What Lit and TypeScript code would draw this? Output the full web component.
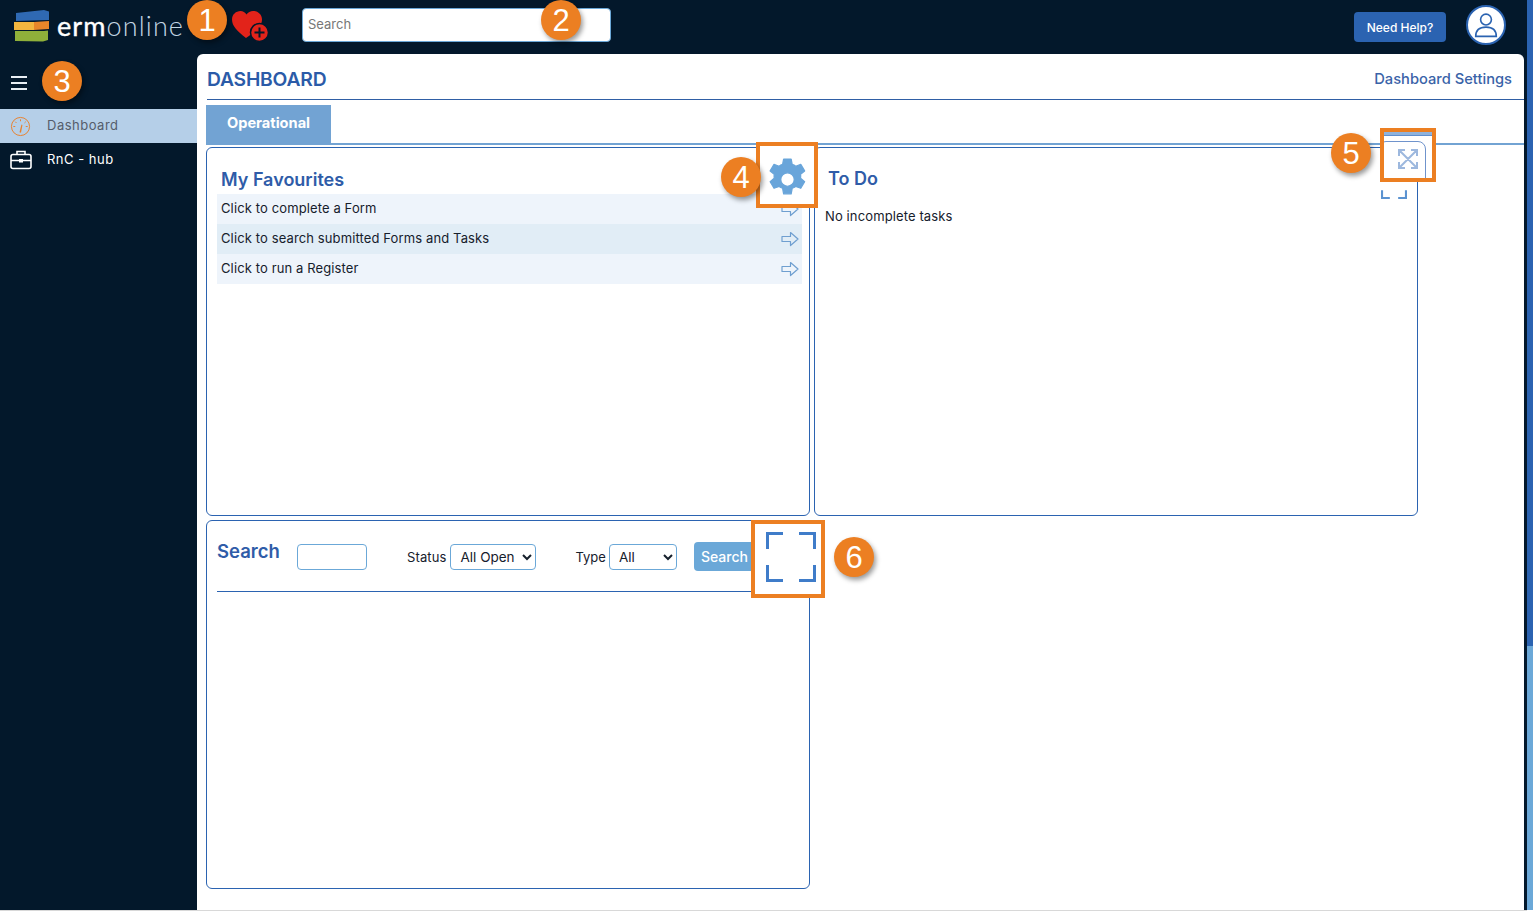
import {css, html, LitElement, svg} from 'lit'
import {customElement} from 'lit/decorators.js'

const arrow = svg`<svg class="arrow" viewBox="0 0 18 16" width="18" height="16"><path d="M1 5.500h8.500V1.500L17 8l-7.500 6.500v-4H1z" fill="none" stroke="#6f9fd0" stroke-width="1.200" stroke-linejoin="round"/></svg>`

const corners = (w: number, t: number, c: string) => svg`<svg viewBox="0 0 50 50" width=${w} height=${w}><path d="M1.500 17V1.500H17M33 1.500h15.500V17M1.500 33v15.500H17M33 48.500h15.500V33" fill="none" stroke=${c} stroke-width=${t}/></svg>`

@customElement('app-root')
export class AppRoot extends LitElement {

    render() {
        return html`
            <div class="page">
                <div class="shell">
                    <header class="top">
                        <svg class="logo" viewBox="0 0 36 32" width="36" height="32">
                            <path d="M2 3l28-3 5 1.500V10L2 11z" fill="#2f69b3"/>
                            <path d="M20 12l15-1v8l-15 1z" fill="#e8862a"/>
                            <path d="M0 12h20v8H0z" fill="#f3b63f"/>
                            <path d="M1 21l29 0 4-.5V30l-5 1.500L1 31z" fill="#8fb03a"/>
                        </svg>
                        <div class="brand"><b>erm</b>online</div>
                        <svg class="heart" viewBox="0 0 38 32" width="38" height="32">
                            <path d="M14 27C5 20 0 15 0 8.500 0 3.500 4 0 8.500 0 11 0 13 1.200 14.500 3.500 16 1.200 18.500 0 21 0c5 0 9 3.500 9 8.500 0 6.500-6 11.500-16 18.500z" fill="#e2231a"/>
                            <circle cx="27.500" cy="21.500" r="9" fill="#e2231a" stroke="#03182b" stroke-width="1.500"/>
                            <path d="M22.500 21.500h10M27.500 16.500v10" stroke="#03182b" stroke-width="2"/>
                        </svg>
                        <input class="global" placeholder="Search"/>
                        <span class="spacer"></span>
                        <button class="help">Need Help?</button>
                        <div class="avatar">
                            <svg viewBox="0 0 24 24" width="26" height="26"><circle cx="12" cy="7" r="5" fill="none" stroke="#2b63b1" stroke-width="1.500"/><path d="M2.500 22.500c0-6 4-8.500 9.500-8.500s9.500 2.500 9.500 8.500z" fill="none" stroke="#2b63b1" stroke-width="1.500"/></svg>
                        </div>
                    </header>
                    <div class="body">
                        <nav class="side">
                            <div class="burger"><i></i><i></i><i></i></div>
                            <div class="item active">
                                <svg viewBox="0 0 22 22" width="21" height="21"><circle cx="11" cy="11" r="9.500" fill="none" stroke="#e8802c" stroke-width="1"/><path d="M10 17l2-8 1 .5-1.500 8z" fill="#e8802c"/><path d="M11 3.500v2M5.500 6l1.300 1.300M16.500 6l-1.300 1.300M3.500 11h2M16.500 11h2" stroke="#e8802c" stroke-width="1"/></svg>
                                <span>Dashboard</span>
                            </div>
                            <div class="item">
                                <svg viewBox="0 0 22 20" width="22" height="20"><rect x="1" y="4.500" width="20" height="14" rx="2" fill="none" stroke="#fff" stroke-width="1.600"/><path d="M7 4.500V1.500h8v3M1 10.500h20" fill="none" stroke="#fff" stroke-width="1.600"/><rect x="9" y="9" width="4" height="3.500" fill="#fff"/></svg>
                                <span>RnC - hub</span>
                            </div>
                        </nav>
                        <main class="panel">
                            <div class="title-row">
                                <h1>DASHBOARD</h1>
                                <a>Dashboard Settings</a>
                            </div>
                            <div class="tabs"><div class="tab">Operational</div></div>
                            <div class="tiles">
                                <section class="tile">
                                    <h2 class="fav">My Favourites</h2>
                                    <div class="rows">
                                        <div class="row"><span>Click to complete a Form</span> ${arrow}</div>
                                        <div class="row"><span>Click to search submitted Forms and Tasks</span> ${arrow}</div>
                                        <div class="row"><span>Click to run a Register</span> ${arrow}</div>
                                    </div>
                                </section>
                                <section class="tile">
                                    <h2 class="todo">To Do</h2>
                                    <p class="none">No incomplete tasks</p>
                                    <span class="small-corners">${corners(26, 5, '#5b93d1')}</span>
                                </section>
                                <section class="tile">
                                    <div class="filters">
                                        <h2 class="search-title">Search</h2>
                                        <input class="term"/>
                                        <label class="status">Status</label>
                                        <select class="s1"><option>All Open</option></select>
                                        <label class="type">Type</label>
                                        <select class="s2"><option>All</option></select>
                                        <button class="go">Search</button>
                                    </div>
                                </section>
                            </div>
                        </main>
                        <div class="strip"></div>
                    </div>
                </div>
                <div class="scroll"><div class="thumb"></div></div>
            </div>

            <div class="box b4">
                <svg viewBox="0 0 24 24" width="49" height="49"><path fill="#69a5da" stroke="#69a5da" stroke-width="0.600" stroke-linejoin="round" fill-rule="evenodd" d="M13.800 2l.5 2.600c.6.200 1.200.5 1.700.9l2.500-.9 1.900 3.200-2 1.700c.1.600.1 1.300 0 1.900l2 1.700-1.900 3.200-2.500-.9c-.5.400-1.100.7-1.700.9l-.5 2.700h-3.700l-.5-2.700c-.6-.2-1.200-.5-1.700-.9l-2.500.9-1.900-3.200 2-1.700c-.1-.6-.1-1.300 0-1.900l-2-1.700 1.900-3.200 2.500.9c.5-.4 1.100-.7 1.700-.9l.5-2.600zM12 8.700a3.300 3.300 0 1 0 0 6.600 3.300 3.300 0 0 0 0-6.600z"/></svg>
            </div>
            <div class="box b5">
                <i class="mini-rule"></i>
                <i class="mini-tile"></i>
                <svg class="expand" viewBox="0 0 24 24" width="24" height="24"><path d="M3 9V3h6M15 3h6v6M3 15v6h6M21 15v6h-6M3.500 3.500l17 17M20.500 3.500l-17 17" fill="none" stroke="#9db8de" stroke-width="2"/></svg>
            </div>
            <div class="box b6">${corners(50, 3, '#3f7cc9')}</div>

            <span class="dot d1">1</span>
            <span class="dot d2">2</span>
            <span class="dot d3">3</span>
            <span class="dot d4">4</span>
            <span class="dot d5">5</span>
            <span class="dot d6">6</span>
        `
    }

    static styles = css`
      :host {
        display: block;
        position: relative;
        width: 1533px;
        height: 912px;
        overflow: hidden;
        background: #fff;
        font-family: "Inter", "Liberation Sans", sans-serif;
        font-size: 13px;
        color: #16202c;
      }

      .page {
        display: flex;
        height: 912px;
      }

      .shell {
        flex: 1;
        display: flex;
        flex-direction: column;
        height: 910px;
        border-bottom: 1px solid #d8d8d8;
        background: #03182b;
      }

      .scroll {
        width: 6px;
        height: 910px;
        background: #6ba8d8;
      }

      .thumb {
        height: 646px;
        background: #2b63b1;
      }

      .top {
        display: flex;
        align-items: center;
        height: 54px;
        padding: 0 21px 0 14px;
        box-sizing: border-box;
      }

      .logo {
        margin-bottom: 3px;
      }

      .brand {
        margin: 0 0 4px 7px;
        width: 125px;
        font-family: "Lato", sans-serif;
        font-weight: 300;
        font-size: 27px;
        letter-spacing: 1.100px;
        color: #c4d6e4;
      }

      .brand b {
        font-weight: 400;
        color: #fff;
        -webkit-text-stroke: 0.400px #fff;
      }

      .heart {
        margin: 0 0 0 50px;
      }

      .global {
        margin: -4px 0 0 32px;
        width: 309px;
        height: 34px;
        box-sizing: border-box;
        padding: 0 5px 2px;
        border: 1px solid #6ba8d8;
        border-radius: 4px;
        font: 13px "Inter", sans-serif;
      }

      .global::placeholder {
        color: #777;
      }

      .spacer {
        flex: 1;
      }

      .help {
        width: 92px;
        height: 30px;
        border: 0;
        border-radius: 4px;
        background: #2b63b1;
        color: #fff;
        font: 500 12px "Inter", sans-serif;
      }

      .avatar {
        display: flex;
        align-items: center;
        justify-content: center;
        margin: -5px 0 0 20px;
        width: 40px;
        height: 40px;
        box-sizing: border-box;
        border: 2px solid #2b63b1;
        border-radius: 50%;
        background: #fff;
      }

      .body {
        flex: 1;
        display: flex;
        min-height: 0;
      }

      .side {
        width: 197px;
        flex: none;
        color: #fff;
      }

      .burger {
        display: flex;
        flex-direction: column;
        gap: 4px;
        width: 16px;
        padding: 22px 0 19px 11px;
      }

      .burger i {
        display: block;
        height: 2px;
        background: #e8eef4;
      }

      .item {
        display: flex;
        align-items: center;
        gap: 15px;
        height: 34px;
        padding-left: 10px;
        font-size: 13px;
      }

      .item span {
        margin-bottom: 2px;
        letter-spacing: 0.500px;
      }

      .item.active {
        background: #b5cfe8;
        color: #555d6b;
      }

      .item.active span {
        margin-left: 1px;
      }

      .panel {
        flex: 1;
        background: #fff;
        border-radius: 6px 6px 0 0;
        padding: 0 0 0 10px;
        min-width: 0;
      }

      .title-row {
        display: flex;
        align-items: center;
        justify-content: space-between;
        height: 45px;
        padding-right: 12px;
        border-bottom: 1px solid #2f5ea5;
      }

      h1 {
        margin: 4px 0 0;
        font-size: 19.300px;
        font-weight: 600;
        letter-spacing: -0.200px;
        color: #2b5ba8;
      }

      .title-row a {
        margin-top: 4px;
        font-size: 14.700px;
        font-weight: 500;
        color: #3a63a8;
      }

      .tabs {
        margin: 5px 0 0 -1px;
        border-bottom: 2px solid #72a3d3;
      }

      .tab {
        display: flex;
        align-items: center;
        justify-content: center;
        width: 125px;
        height: 38px;
        padding-bottom: 2px;
        box-sizing: border-box;
        background: #72a3d3;
        color: #fff;
        font-size: 14.600px;
        font-weight: 700;
      }

      .tiles {
        display: grid;
        grid-template-columns: 604px 604px;
        grid-template-rows: 369px 369px;
        gap: 4px;
        margin: 2px 0 0 -1px;
      }

      .tile {
        position: relative;
        box-sizing: border-box;
        border: 1px solid #2b63b1;
        border-radius: 6px;
        background: #fff;
      }

      h2 {
        margin: 0;
        font-size: 18px;
        font-weight: 600;
        color: #2f5ca8;
      }

      .fav {
        padding: 21px 0 0 14px;
        height: 25px;
      }

      .rows {
        margin: 0 7px 0 10px;
      }

      .row {
        display: flex;
        align-items: center;
        justify-content: space-between;
        height: 30px;
        padding: 0 3px 0 4px;
        background: #eef4fb;
        letter-spacing: 0.120px;
      }

      .row span {
        margin-bottom: 2px;
      }

      .row:nth-child(2) {
        background: #e1edf6;
      }

      .arrow {
        flex: none;
      }

      .todo {
        padding: 20px 0 0 13px;
      }

      .none {
        margin: 19px 0 0 10px;
        letter-spacing: 0.120px;
      }

      .small-corners {
        position: absolute;
        top: 25px;
        right: 10px;
      }

      .filters {
        display: flex;
        align-items: center;
        height: 68px;
        padding-top: 2px;
        margin-left: 10px;
        border-bottom: 1px solid #2b63b1;
      }

      .search-title {
        width: 80px;
        margin-top: -13px;
        font-size: 18.500px;
      }

      .filters input,
      .filters select {
        box-sizing: border-box;
        border: 1px solid #6ba8d8;
        border-radius: 4px;
        background: #fff;
        font: 13.500px "Inter", sans-serif;
        color: #16202c;
      }

      .term {
        width: 70px;
        height: 26px;
        margin-right: 40px;
      }

      .status {
        margin-right: 4px;
        letter-spacing: 0.120px;
      }

      .s1 {
        width: 86px;
        height: 26px;
        padding-left: 5px;
        margin-right: 39px;
      }

      .type {
        margin-right: 3px;
      }

      .s2 {
        width: 68px;
        height: 26px;
        padding-left: 5px;
      }

      .go {
        margin-left: 17px;
        margin-top: -1px;
        width: 70px;
        height: 29px;
        border: 0;
        border-radius: 4px;
        background: #6ba8d8;
        color: #fff;
        font: 500 14px "Inter", sans-serif;
        text-align: left;
        padding-left: 7px;
      }

      .strip {
        width: 3px;
      }

      .box {
        position: absolute;
        box-sizing: border-box;
        border: 4px solid #ec7f22;
        background: #fff;
      }

      .b4 {
        left: 756px;
        top: 142px;
        width: 62px;
        height: 66px;
        padding: 9px 0 0 3px;
      }

      .b5 {
        left: 1380px;
        top: 128px;
        width: 56px;
        height: 54px;
        overflow: hidden;
        padding: 15px 0 0 12px;
      }

      .b6 {
        left: 751px;
        top: 520px;
        width: 74px;
        height: 78px;
        padding: 8px 0 0 11px;
      }

      .b4 svg,
      .b6 svg {
        display: block;
      }

      .mini-rule {
        position: absolute;
        left: 0;
        right: 0;
        top: 0;
        height: 3px;
        background: #8fb3dd;
        border-bottom: 1px solid #5f8fd0;
      }

      .mini-tile {
        position: absolute;
        left: -6px;
        top: 9px;
        width: 48px;
        height: 50px;
        box-sizing: border-box;
        border: 1px solid #6f93cc;
        border-radius: 8px;
      }

      .expand {
        position: relative;
        display: block;
      }

      .dot {
        position: absolute;
        display: flex;
        align-items: center;
        justify-content: center;
        box-sizing: border-box;
        width: 40px;
        height: 40px;
        padding-top: 2px;
        border-radius: 50%;
        background: #ec7f22;
        color: #fff;
        font-family: "Liberation Sans", sans-serif;
        font-size: 31px;
        box-shadow: 2px 3px 5px rgba(0, 0, 0, 0.4);
      }

      .d1 { left: 187px; top: 0; }
      .d2 { left: 541px; top: 0; }
      .d3 { left: 42px; top: 61px; }
      .d4 { left: 721px; top: 157px; }
      .d5 { left: 1331px; top: 133px; }
      .d6 { left: 834px; top: 537px; }
    `
}

declare global {
    interface HTMLElementTagNameMap {
        'app-root': AppRoot
    }
}
